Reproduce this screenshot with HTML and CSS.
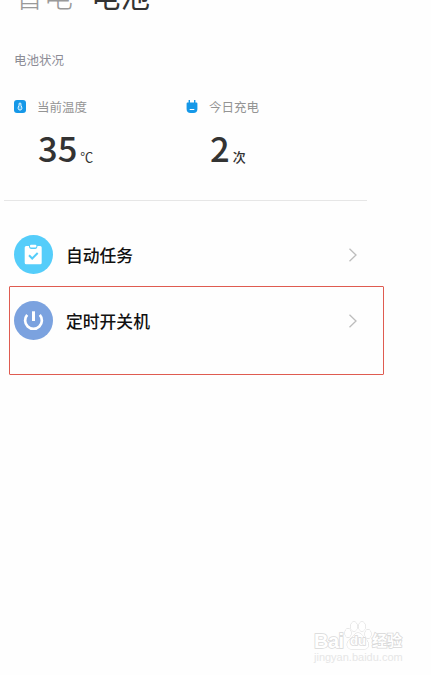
FILE: index.html
```
<!DOCTYPE html>
<html lang="zh-CN">
<head>
<meta charset="utf-8">
<title>电池</title>
<link rel="stylesheet" href="styles.css">
</head>
<body>
<div class="page">
  <div class="tabs">
    <span class="tab">省电</span>
    <span class="tab active">电池</span>
  </div>

  <h2>电池状况</h2>

  <div class="stats">
    <div class="stat">
      <div class="label">
        <svg width="12" height="13" viewBox="0 0 12 13">
          <rect width="12" height="13" rx="3" fill="#1598e8"/>
          <path d="M5 5.500L5.200 3.200h1.600L7 5.500c1.400 2 1.200 4.600-1 4.600S3.600 7.500 5 5.500z" fill="#45b2f2" stroke="#e6f6ff" stroke-width="1"/>
        </svg>
        <span>当前温度</span>
      </div>
      <div class="value"><b>35</b><span class="unit degree">℃</span></div>
    </div>
    <div class="stat">
      <div class="label">
        <svg width="12" height="13" viewBox="0 0 12 13">
          <path d="M3.3 0v3M8.700 0v3" stroke="#1598e8" stroke-width="1.4"/>
          <path d="M.6 3.400q0-1 1-1h8.800q1 0 1 1V9q0 4-4 4H4.600q-4 0-4-4z" fill="#1598e8"/>
          <path d="M3.700 9.500h4.600" stroke="#fff" stroke-width="1"/>
        </svg>
        <span>今日充电</span>
      </div>
      <div class="value"><b>2</b><span class="unit">次</span></div>
    </div>
  </div>

  <div class="list">
    <div class="item">
      <svg class="icon" width="39" height="39" viewBox="0 0 39 39">
        <circle cx="19.500" cy="19.500" r="19.500" fill="#55cdfa"/>
        <path d="M12.200 11h2.700q.3 3 2.300 3h4q2 0 2.300-3h2.700q1.500 0 1.500 1.500v15.200q0 1.500-1.500 1.500h-14q-1.500 0-1.500-1.500V12.500q0-1.500 1.500-1.500z" fill="#fff"/>
        <rect x="16" y="9.800" width="6.400" height="2.600" rx="1" fill="#fff"/>
        <path d="M15 20.300l3.200 3.200 5.500-5.500" fill="none" stroke="#55cdfa" stroke-width="2"/>
      </svg>
      <span class="name">自动任务</span>
      <svg class="arrow" width="10" height="14" viewBox="0 0 10 14">
        <path d="M1.500 .8L8 7l-6.500 6.200" fill="none" stroke="#bdbdbd" stroke-width="1.300"/>
      </svg>
    </div>
    <div class="item marked">
      <svg class="icon" width="39" height="39" viewBox="0 0 39 39">
        <circle cx="19.500" cy="19.500" r="19.500" fill="#7ba2df"/>
        <path d="M13.200 13.800a8.400 8.400 0 1 0 12.600 0" fill="none" stroke="#fff" stroke-width="2.700"/>
        <path d="M19.500 10.300v9.700" stroke="#fff" stroke-width="3"/>
      </svg>
      <span class="name">定时开关机</span>
      <svg class="arrow" width="10" height="14" viewBox="0 0 10 14">
        <path d="M1.500 .8L8 7l-6.500 6.200" fill="none" stroke="#bdbdbd" stroke-width="1.300"/>
      </svg>
    </div>
  </div>

  <div class="watermark">
    <div class="brand">
      <span class="bai">Bai</span>
      <span class="paw">
        <svg width="28" height="29" viewBox="0 0 28 29">
          <g fill="#fff" stroke="#d8d8d8" stroke-width="1">
            <ellipse cx="4" cy="12" rx="3" ry="4.300"/>
            <ellipse cx="10" cy="5.500" rx="3.200" ry="4.600"/>
            <ellipse cx="18" cy="5.500" rx="3.200" ry="4.600"/>
            <ellipse cx="24" cy="13" rx="3" ry="4.300"/>
            <path d="M14 12c4 0 5 4 8 6.500s4 9.500-1.500 9.500h-13C2 28 2 21 6 18.500 9.500 16 10 12 14 12z"/>
          </g>
        </svg>
        <i>du</i>
      </span>
      <span class="cn">经验</span>
    </div>
    <div class="site">jingyan.baidu.com</div>
  </div>
</div>
</body>
</html>
```

FILE: styles.css
```
body {
  margin: 0;
  background: #fefefe;
  color: #333;
  font-family: "Noto Sans CJK SC", "Noto Sans", sans-serif;
}
.page {
  display: flex;
  flex-direction: column;
  width: 431px;
  height: 675px;
  overflow: hidden;
}
/* the tab titles are scrolled partly out of view */
.tabs {
  display: flex;
  align-items: flex-end;
  gap: 18px;
  height: 9px;
  padding: 0 0 3px 14px;
  overflow: hidden;
}
.tab {
  flex: none;
  font-size: 29.5px;
  line-height: 30px;
  font-weight: 300;
  color: #999;
}
.tab.active {
  font-weight: 400;
  color: #333;
}
h2 {
  margin: 38px 0 0 14px;
  font-size: 12.500px;
  line-height: 20px;
  font-weight: 400;
  color: #8c8c96;
}
.stats {
  display: flex;
  height: 104px;
  margin: 26px 64px 0 4px;
  border-bottom: 1px solid #e6e6e6;
}
.stat {
  width: 172px;
}
.label {
  display: flex;
  align-items: center;
  gap: 11px;
  height: 20px;
  padding-left: 10px;
  font-size: 12.500px;
  color: #949494;
}
.value {
  display: flex;
  align-items: baseline;
  gap: 3px;
  padding: 11px 0 0 34px;
  line-height: 40px;
}
.value b {
  font-size: 34.5px;
  font-weight: 500;
}
.unit {
  font-size: 13px;
  font-weight: 500;
}
.degree {
  font-weight: 400;
}
.list {
  padding: 20px 47px 0 9px;
}
.item {
  display: flex;
  align-items: flex-start;
  box-sizing: border-box;
  height: 65px;
  padding: 14px 26px 0 5px;
}
.item.marked {
  height: 89px;
  padding: 14px 25px 0 4px;
  border: 1px solid #df5b50;
  border-radius: 1px;
}
.name {
  flex: 1;
  padding-left: 13px;
  font-size: 16.8px;
  line-height: 41px;
  font-weight: 500;
  color: #111;
}
.arrow {
  margin-top: 13px;
}
.watermark {
  width: 92px;
  margin: 246px 0 0 314px;
  color: #fff;
  font-family: "Liberation Sans", "Noto Sans CJK SC", sans-serif;
  -webkit-text-stroke: 1.5px #d8d8d8;
  paint-order: stroke fill;
}
.brand {
  display: flex;
  align-items: flex-end;
  height: 29px;
  font-size: 20px;
  line-height: 18px;
  font-weight: 700;
}
.bai {
  width: 30px;
  letter-spacing: -.5px;
}
.paw {
  position: relative;
  flex: none;
  width: 28px;
  height: 29px;
}
.paw svg {
  display: block;
}
.paw i {
  position: absolute;
  left: 6px;
  top: 13px;
  font-size: 13px;
  line-height: 14px;
  font-style: normal;
}
.cn {
  font-size: 15px;
}
.site {
  font-size: 11px;
  line-height: 14px;
  color: #e6e6e6;
  -webkit-text-stroke: 0;
}
```
